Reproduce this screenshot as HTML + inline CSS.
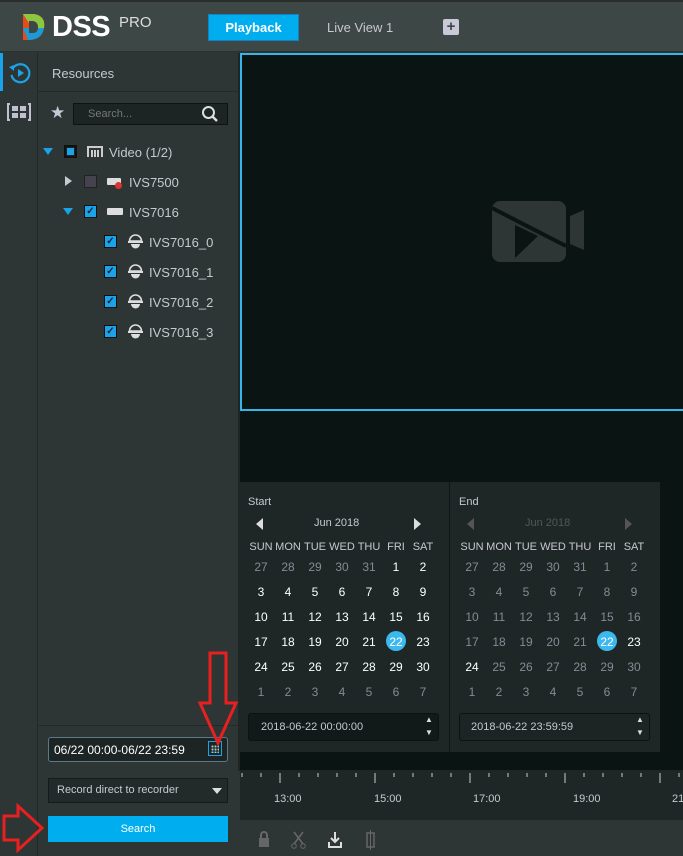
<!DOCTYPE html>
<html><head><style>
*{margin:0;padding:0;box-sizing:border-box}
body{width:683px;height:856px;overflow:hidden;background:#2d3634;font-family:"Liberation Sans",sans-serif;position:relative;color:#c8c8d0}
.a{position:absolute}
.top{left:0;top:0;width:683px;height:52px;background:#3d4745;border-top:2px solid #2a2f2e;border-bottom:1px solid #2a3130}
.t{font-size:12px;white-space:nowrap}
.cb{width:13px;height:13px;border:1px solid #111;background:#1aa3e8;color:#123;font-size:10px;line-height:11px;text-align:center;font-weight:bold}
.cal{background:#1e2726}
.d{position:absolute;width:26px;text-align:center;font-size:12px;transform:translateX(-13px)}
.w{color:#fff}.g{color:#8a8895}
</style></head><body>
<div class="a top"></div>
<svg class="a" style="left:20px;top:12px" width="28" height="30" viewBox="0 0 28 30">
<path d="M3 2 L14 2 Q26 4 24 16 Q22 28 8 28 L3 28 Z" fill="#e84a1a"/>
<path d="M3 2 L14 2 Q26 4 24 16 L12 16 Z" fill="#8dc63f"/>
<path d="M3 16 L24 16 Q22 28 8 28 Z" fill="#1b9ad6"/>
<path d="M9 9 L13 9 Q18 10 18 15 Q18 21 13 21 L9 21 Z" fill="#3d4745"/>
</svg>
<div class="a" style="left:52px;top:11px;font-size:29px;font-weight:bold;color:#fff;letter-spacing:-0.5px">DSS</div>
<div class="a" style="left:119px;top:14px;font-size:15px;color:#ddd">PRO</div>
<div class="a" style="left:208px;top:14px;width:91px;height:27px;background:#00aef0;border:1px solid #1780c0;color:#fff;font-size:13px;font-weight:bold;text-align:center;line-height:25px">Playback</div>
<div class="a t" style="left:327px;top:20px;font-size:13px;color:#c8c8d0">Live View 1</div>
<div class="a" style="left:443px;top:19px;width:16px;height:16px;background:#c8c8d8;border-radius:2px;color:#3d4745;font-size:15px;font-weight:bold;text-align:center;line-height:16px">+</div>
<div class="a" style="left:0;top:53px;width:38px;height:803px;background:#2d3634;border-right:1px solid #222a29"></div>
<div class="a" style="left:0;top:53px;width:3px;height:38px;background:#1aa3e8"></div>
<svg class="a" style="left:8px;top:61px" width="24" height="24" viewBox="0 0 24 24"><path d="M5 7A9 9 0 1 1 3.5 14" fill="none" stroke="#1aa3e8" stroke-width="2.2"/><path d="M1 6L6 4L6 10Z" fill="#1aa3e8"/><path d="M10 8 L16 12 L10 16Z" fill="#1aa3e8"/></svg>
<svg class="a" style="left:7px;top:103px" width="24" height="18" viewBox="0 0 24 18"><path d="M3 1H1V17H3M21 1H23V17H21" fill="none" stroke="#c0c0d0" stroke-width="2"/><rect x="5" y="3" width="6" height="5" fill="#c0c0d0"/><rect x="13" y="3" width="6" height="5" fill="#c0c0d0"/><rect x="5" y="10" width="6" height="5" fill="#c0c0d0"/><rect x="13" y="10" width="6" height="5" fill="#c0c0d0"/></svg>
<div class="a t" style="left:52px;top:66px;font-size:13px">Resources</div>
<div class="a" style="left:38px;top:91px;width:200px;height:1px;background:#222a29"></div>
<div class="a" style="left:50px;top:103px;font-size:17px;color:#c8c8d8">★</div>
<div class="a" style="left:73px;top:103px;width:155px;height:22px;background:#1c2524;border:1px solid #111"></div>
<div class="a t" style="left:88px;top:108px;font-size:11px;color:#777">Search...</div>
<svg class="a" style="left:201px;top:105px" width="18" height="18" viewBox="0 0 18 18"><circle cx="7.5" cy="7.5" r="5.5" fill="none" stroke="#ddd" stroke-width="2"/><path d="M11.5 11.5L16 16" stroke="#ddd" stroke-width="2.4"/></svg>
<div class="a" style="left:43px;top:148px;width:0;height:0;border-left:5px solid transparent;border-right:5px solid transparent;border-top:7px solid #1aa3e8"></div>
<div class="a" style="left:64px;top:145px;width:13px;height:13px;border:2px solid #111;background:#1aa3e8;box-shadow:inset 0 0 0 1px #1c2524"></div>
<svg class="a" style="left:87px;top:145px" width="16" height="13" viewBox="0 0 16 13"><path d="M1 12V2H15V12" fill="none" stroke="#ccc" stroke-width="2"/><path d="M5 5V12M8 5V12M11 5V12" stroke="#ccc" stroke-width="2"/></svg>
<div class="a t" style="left:109px;top:145px;font-size:13px">Video (1/2)</div>
<div class="a" style="left:65px;top:176px;border-top:5px solid transparent;border-bottom:5px solid transparent;border-left:7px solid #c8c8d0"></div>
<div class="a" style="left:84px;top:175px;width:13px;height:13px;background:#45434f;border:1px solid #222"></div>
<div class="a" style="left:107px;top:178px;width:14px;height:7px;background:#ddd;border-radius:1px"></div>
<div class="a" style="left:115px;top:182px;width:7px;height:7px;background:#d33;border-radius:50%"></div>
<div class="a t" style="left:129px;top:175px;font-size:13px">IVS7500</div>
<div class="a" style="left:63px;top:208px;width:0;height:0;border-left:5px solid transparent;border-right:5px solid transparent;border-top:7px solid #1aa3e8"></div>
<div class="a cb" style="left:84px;top:205px">✓</div>
<div class="a" style="left:107px;top:208px;width:16px;height:7px;background:#ddd;border-radius:1px"></div>
<div class="a t" style="left:129px;top:205px;font-size:13px">IVS7016</div>
<div class="a cb" style="left:104px;top:235px">✓</div><div class="a t" style="left:149px;top:235px;font-size:13px">IVS7016_0</div>
<div class="a cb" style="left:104px;top:265px">✓</div><div class="a t" style="left:149px;top:265px;font-size:13px">IVS7016_1</div>
<div class="a cb" style="left:104px;top:295px">✓</div><div class="a t" style="left:149px;top:295px;font-size:13px">IVS7016_2</div>
<div class="a cb" style="left:104px;top:325px">✓</div><div class="a t" style="left:149px;top:325px;font-size:13px">IVS7016_3</div>
<svg class="a" style="left:128px;top:234px" width="15" height="112" viewBox="0 0 15 112">
<g id="dm"><path d="M1.5 7A6 6 0 0 1 13.5 7Z" fill="none" stroke="#ddd" stroke-width="1.6"/><rect x="0" y="7" width="15" height="2" fill="#ddd"/><path d="M3 10H12A4.5 4.5 0 0 1 3 10Z" fill="#ddd"/></g>
<use href="#dm" y="30"/><use href="#dm" y="60"/><use href="#dm" y="90"/></svg>
<div class="a" style="left:38px;top:725px;width:200px;height:1px;background:#222a29"></div>
<div class="a" style="left:48px;top:737px;width:180px;height:25px;background:#1c2524;border:1px solid #5a7a8a;border-radius:3px"></div>
<div class="a t" style="left:54px;top:743px;font-size:12px;color:#fff">06/22 00:00-06/22 23:59</div>
<div class="a" style="left:208px;top:741px;width:14px;height:15px;border:1px solid #1aa3e8;background:#1c2524"></div>
<div class="a" style="left:211px;top:745px;width:8px;height:8px;background:radial-gradient(circle,#9cc 1px,transparent 1.2px) 0 0/3px 3px"></div>
<div class="a" style="left:48px;top:778px;width:180px;height:25px;background:#232b2a;border:1px solid #151a1a"></div>
<div class="a t" style="left:57px;top:784px;font-size:11px">Record direct to recorder</div>
<div class="a" style="left:212px;top:788px;border-left:5px solid transparent;border-right:5px solid transparent;border-top:6px solid #ddd"></div>
<div class="a" style="left:48px;top:816px;width:180px;height:26px;background:#00aef0;color:#fff;font-size:11px;text-align:center;line-height:26px">Search</div>
<div class="a" style="left:238px;top:53px;width:445px;height:718px;background:#0a1413;border-left:2px solid #1e2726"></div>
<div class="a" style="left:240px;top:53px;width:443px;height:358px;border:2px solid #38b4e8;border-right:none"></div>
<svg class="a" style="left:492px;top:200px" width="95" height="64" viewBox="0 0 95 64"><rect x="0" y="1" width="74" height="61" rx="8" fill="#2d3634"/><path d="M78 16L92 10V50L78 44Z" fill="#2d3634"/><path d="M0 8L74 46" stroke="#0a1413" stroke-width="4"/><path d="M23 25L23 58L46 36Z" fill="#0a1413"/></svg>
<div class="a cal" style="left:238px;top:482px;width:422px;height:270px"></div>
<div class="a" style="left:449px;top:482px;width:1px;height:270px;background:#0f1716"></div>
<div class="a t" style="left:248px;top:496px;font-size:11px">Start</div>
<div class="a t" style="left:459px;top:496px;font-size:11px">End</div>
<div class="a" style="left:256px;top:518px;border-top:6px solid transparent;border-bottom:6px solid transparent;border-right:7px solid #ddd"></div>
<div class="a" style="left:414px;top:518px;border-top:6px solid transparent;border-bottom:6px solid transparent;border-left:7px solid #ddd"></div>
<div class="a" style="left:467px;top:518px;border-top:6px solid transparent;border-bottom:6px solid transparent;border-right:7px solid #555"></div>
<div class="a" style="left:625px;top:518px;border-top:6px solid transparent;border-bottom:6px solid transparent;border-left:7px solid #555"></div>
<div class="a t" style="left:314px;top:517px;font-size:11px">Jun 2018</div>
<div class="a t" style="left:525px;top:517px;font-size:11px;color:#555">Jun 2018</div>
<div id="cals"></div>
<div class="a" style="left:248px;top:713px;width:191px;height:28px;background:#111a19;border:1px solid #0c1211;border-radius:3px"></div>
<div class="a t" style="left:261px;top:721px;font-size:11px">2018-06-22 00:00:00</div>
<div class="a t" style="left:425px;top:713px;font-size:8px;line-height:13px;color:#ddd">▲<br>▼</div>
<div class="a" style="left:459px;top:713px;width:191px;height:28px;background:#1c2524;border:1px solid #0c1211;border-radius:3px"></div>
<div class="a t" style="left:471px;top:721px;font-size:11px">2018-06-22 23:59:59</div>
<div class="a t" style="left:636px;top:713px;font-size:8px;line-height:13px;color:#ddd">▲<br>▼</div>
<div class="a" style="left:240px;top:770px;width:443px;height:50px;background:#1e2726"></div>
<svg class="a" style="left:240px;top:770px" width="443" height="20"><g stroke="#ccc" stroke-width="1">
<path d="M2 3V7M21 3V7M40 3V13M59 3V7M78 3V7M97 3V7M116 3V7M135 3V13M154 3V7M173 3V7M192 3V7M211 3V7M230 3V13M249 3V7M268 3V7M287 3V7M306 3V7M325 3V13M344 3V7M363 3V7M382 3V7M401 3V7M420 3V13M439 3V7"/></g></svg>
<div class="a t" style="left:274px;top:793px;font-size:11px">13:00</div>
<div class="a t" style="left:374px;top:793px;font-size:11px">15:00</div>
<div class="a t" style="left:473px;top:793px;font-size:11px">17:00</div>
<div class="a t" style="left:573px;top:793px;font-size:11px">19:00</div>
<div class="a t" style="left:672px;top:793px;font-size:11px">21:00</div>
<div class="a" style="left:240px;top:820px;width:443px;height:36px;background:#2d3634"></div>
<svg class="a" style="left:255px;top:830px" width="130" height="20" viewBox="0 0 130 20">
<rect x="4" y="8" width="10" height="9" fill="#666"/><path d="M6 8V5A3 3 0 0 1 12 5V8" fill="none" stroke="#666" stroke-width="2"/>
<path d="M39 2L48 14M48 2L39 14" stroke="#666" stroke-width="1.6"/><circle cx="39" cy="16" r="2.3" fill="none" stroke="#666"/><circle cx="48" cy="16" r="2.3" fill="none" stroke="#666"/>
<path d="M80 2V11M76 8L80 12L84 8" stroke="#ddd" stroke-width="2" fill="none"/><path d="M74 12V17H86V12" stroke="#ddd" stroke-width="2" fill="none"/>
<rect x="112" y="3" width="7" height="14" fill="none" stroke="#666" stroke-width="1.5"/><path d="M115.5 0V20" stroke="#666"/>
</svg>
<svg class="a" style="left:0;top:650px" width="240" height="206">
<path d="M210 3H226V53H236L218 93L200 53H210Z" fill="none" stroke="#e82020" stroke-width="3"/>
<path d="M4 166H18V156L42 178L18 200V190H4Z" fill="none" stroke="#e82020" stroke-width="3"/>
</svg>
<script>
var h='';
function cal(x0,white){
 var xs=[0,27,54,81,108,135,162],days=['SUN','MON','TUE','WED','THU','FRI','SAT'];
 for(var i=0;i<7;i++)h+='<div class="d" style="left:'+(x0+xs[i])+'px;top:541px;font-size:11px;color:#c8c8d0;width:32px;transform:translateX(-16px)">'+days[i]+'</div>';
 var n=[27,28,29,30,31];for(var i=1;i<=30;i++)n.push(i);for(var i=1;i<=7;i++)n.push(i);
 for(var k=0;k<42;k++){var r=Math.floor(k/7),c=k%7,v=n[k];var cls=white(k)?'w':'g';
  var y=560+r*25;
  if(k==26){h+='<div class="a" style="left:'+(x0+xs[c]-10)+'px;top:'+(y-4)+'px;width:20px;height:20px;border-radius:50%;background:#3bb8ee"></div>';cls='w';}
  h+='<div class="d '+cls+'" style="left:'+(x0+xs[c])+'px;top:'+y+'px">'+v+'</div>';}
}
cal(261,function(k){return k>=5&&k<35});
cal(472,function(k){return k==26||k==27||k==28});
document.getElementById('cals').innerHTML=h;
</script>
</body></html>
